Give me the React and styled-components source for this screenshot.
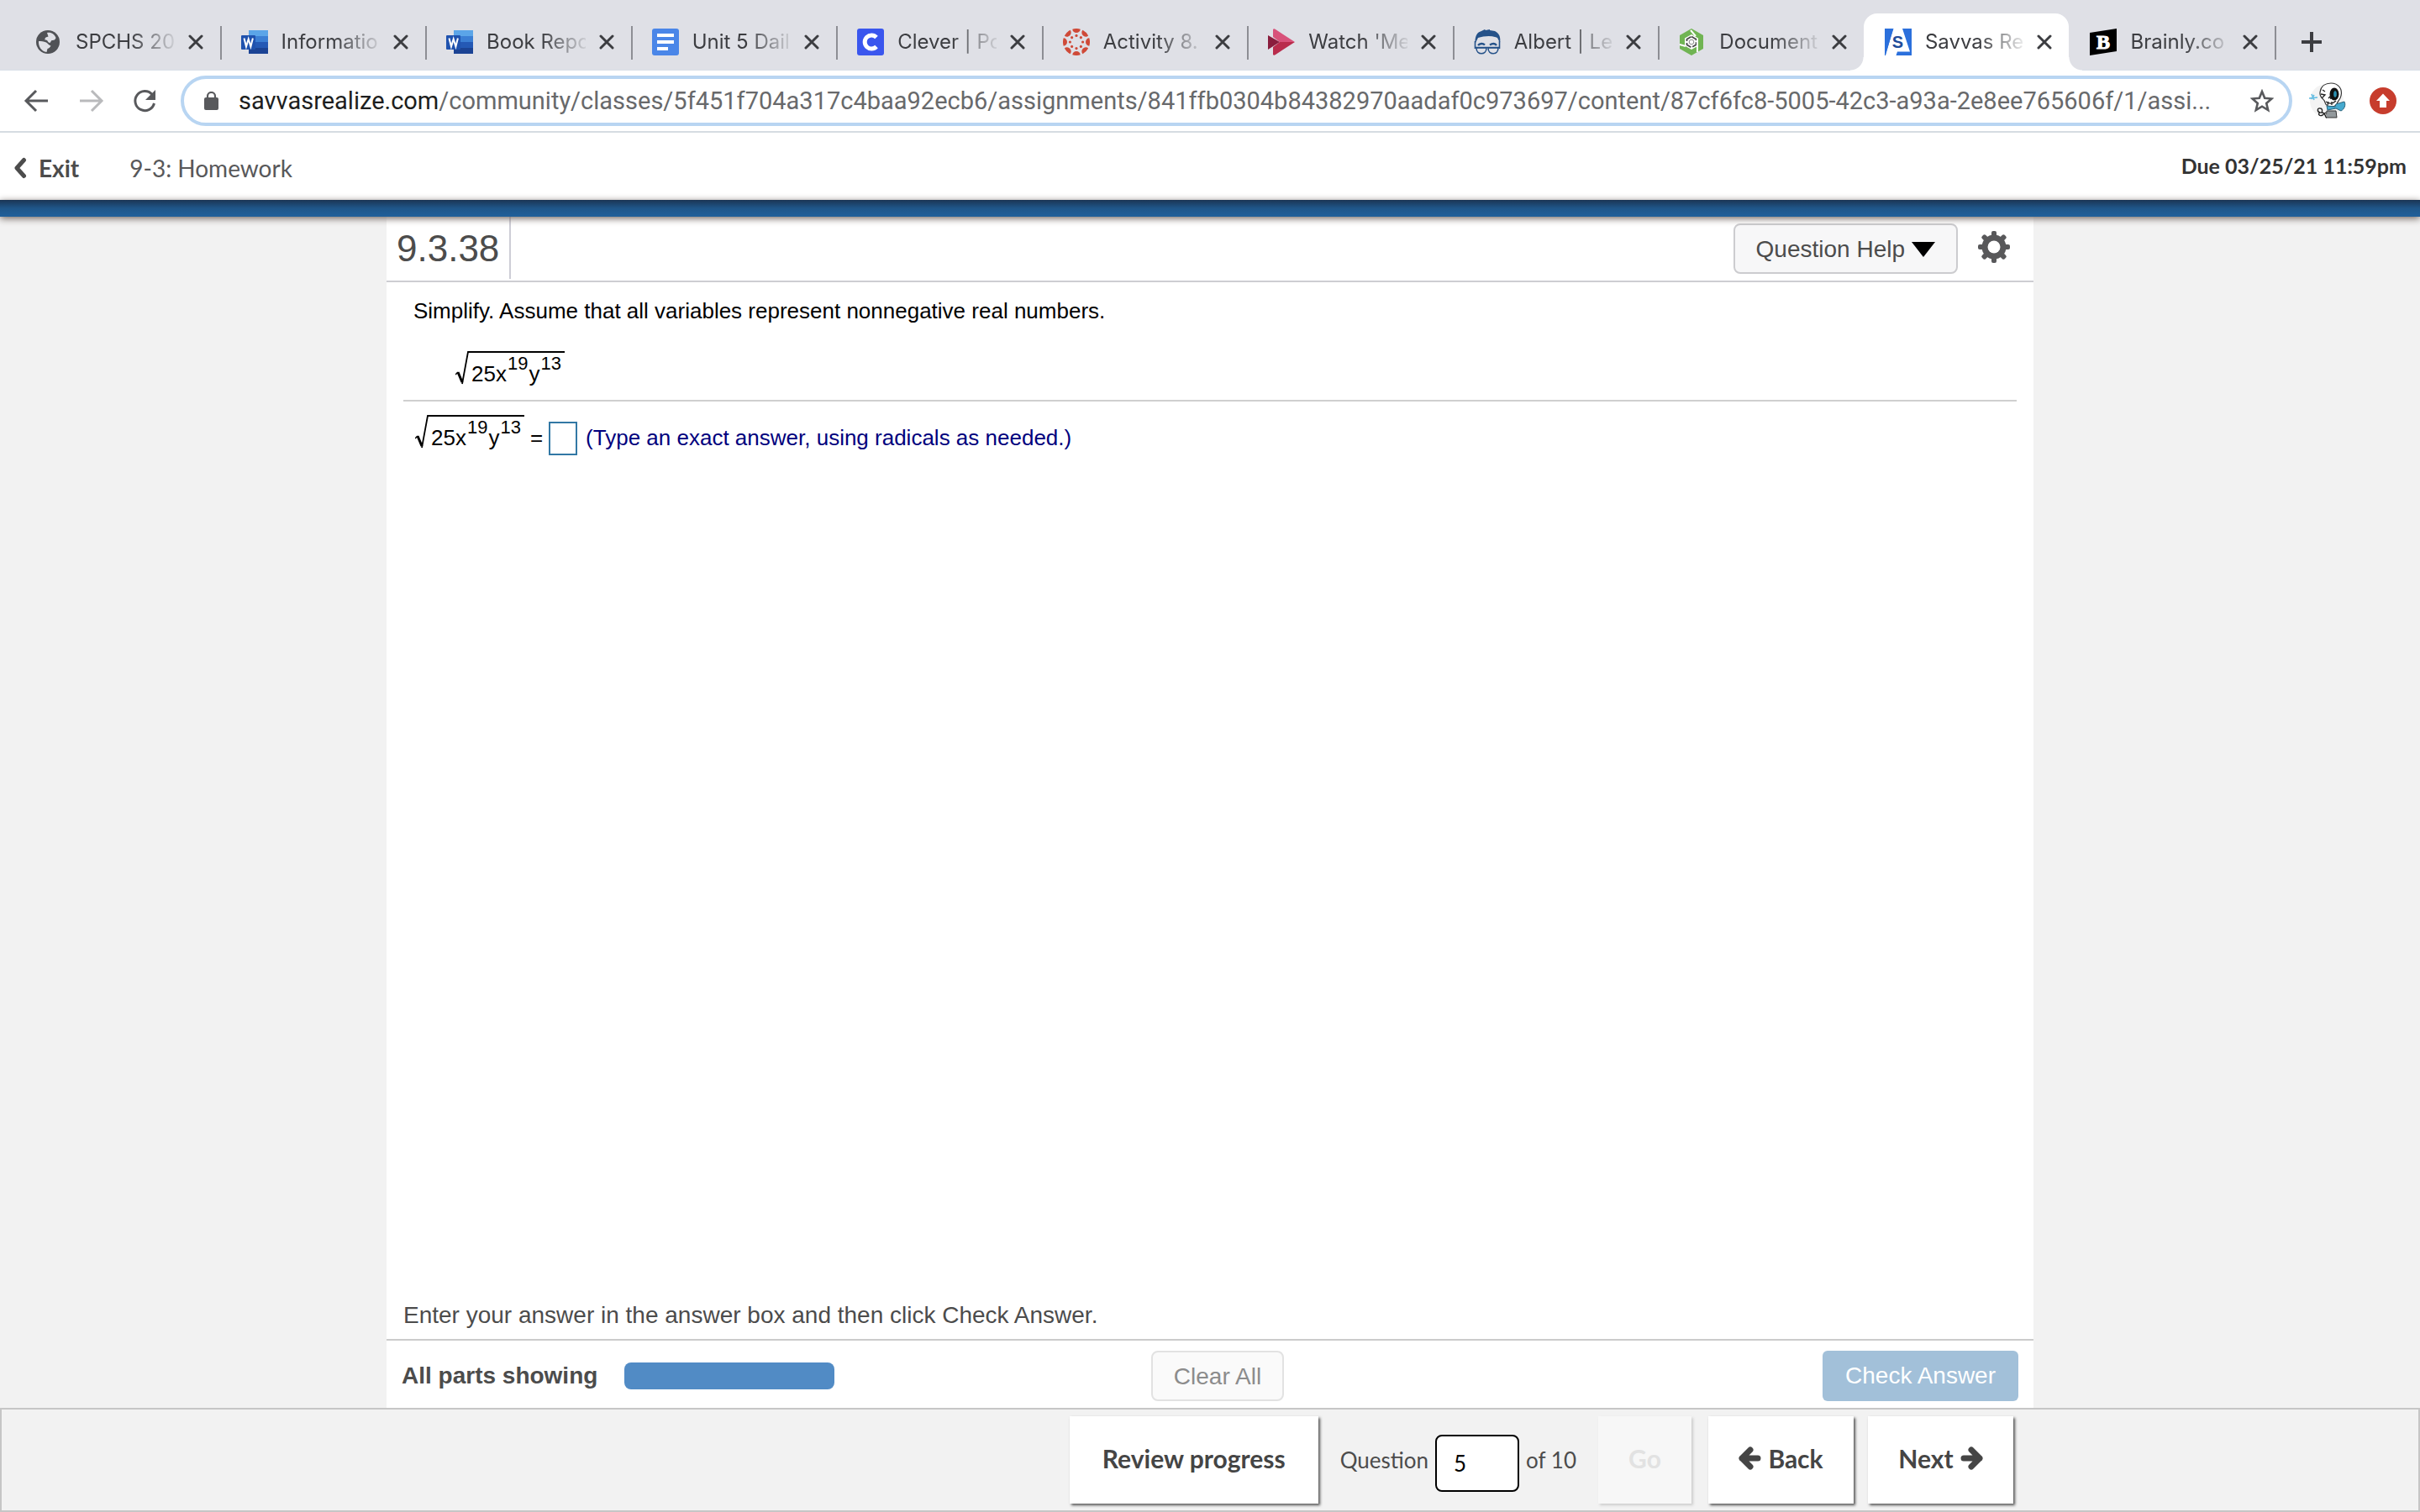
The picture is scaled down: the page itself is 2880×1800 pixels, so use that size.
import React from "react";
import styled, { createGlobalStyle } from "styled-components";

const ui = `Inter, "Liberation Sans", sans-serif`;
const omni = `Roboto, "Liberation Sans", sans-serif`;
const brand = `Lato, "Liberation Sans", sans-serif`;
const body = `"Liberation Sans", Arial, sans-serif`;

const GlobalStyle = createGlobalStyle`
  *, *::before, *::after { box-sizing: border-box; }
  html, body, #root { height: 100%; }
  body { margin: 0; background: #f2f2f2; color: #4c4c4c; font-family: ${body}; }
  button, input { font: inherit; color: inherit; }
  button { margin: 0; padding: 0; border: 0; background: none; }
  svg { display: block; flex: none; }
`;

const Page = styled.div`
  display: flex;
  flex-direction: column;
  min-height: 100vh;
`;

/* ---------- browser tabs ---------- */
const TabStrip = styled.div`
  display: flex;
  height: 84px;
  padding-top: 16px;
  padding-left: 17px;
  background: #dfe0e6;
  border-bottom: 1px solid #d9e0e8;
  font-family: ${ui};
  font-size: 24px;
  color: #3c3d41;
`;
const Tabs = styled.div`
  flex: 1;
  display: grid;
  grid-template-columns: repeat(11, minmax(0, 1fr));
`;
const Tab = styled.div`
  position: relative;
  display: flex;
  align-items: center;
  padding: 0 18px 0 25px;
  height: 68px;
  border-radius: 16px 16px 0 0;
  background: ${(p) => (p.$active ? "#fff" : "transparent")};
  &::after {
    content: "";
    position: absolute;
    right: -2px;
    top: 15px;
    width: 2px;
    height: 40px;
    background: ${(p) => (p.$line ? "#8d8e94" : "transparent")};
  }
`;
const Flare = styled.span`
  position: absolute;
  bottom: 0;
  ${(p) => p.$side}: -16px;
  width: 16px;
  height: 16px;
  background: radial-gradient(
    circle at ${(p) => (p.$side === "left" ? "0 0" : "100% 0")},
    transparent 15px,
    #fff 16px
  );
`;
const TabLabel = styled.span`
  flex: 1;
  min-width: 0;
  margin: 0 16px;
  white-space: nowrap;
  line-height: 32px;
  mask-image: linear-gradient(to right, #000 55%, transparent 105%);
`;
const CloseButton = styled.button`
  display: flex;
  align-items: center;
  width: 20px;
  height: 32px;
`;
const NewTab = styled.div`
  width: 173px;
  padding-left: 32px;
  display: flex;
  align-items: center;
`;

/* ---------- address bar ---------- */
const Toolbar = styled.div`
  display: flex;
  align-items: center;
  height: 74px;
  padding: 0 28px;
  background: #fff;
  border-bottom: 2px solid #d5dce2;
`;
const ToolButton = styled.button`
  display: flex;
  width: 32px;
  margin-right: 32px;
`;
const Address = styled.div`
  flex: 1;
  min-width: 0;
  display: flex;
  align-items: center;
  height: 60px;
  margin: 0 20px 0 -5px;
  padding: 0 18px 0 24px;
  border: 4px solid #b8d5f2;
  border-radius: 30px;
`;
const Url = styled.span`
  flex: 1;
  min-width: 0;
  margin: 0 16px 0 24px;
  white-space: nowrap;
  font-family: ${omni};
  font-size: 29px;
  line-height: 36px;
  color: #68696b;
`;
const Host = styled.span`
  color: #1d1e20;
`;
const Extensions = styled.div`
  display: flex;
  align-items: center;
  gap: 28px;
`;

/* ---------- assignment header ---------- */
const Header = styled.header`
  display: flex;
  align-items: center;
  height: 80px;
  padding: 4px 16px 0;
  background: #fff;
  font-family: ${brand};
  font-size: 28px;
  line-height: 36px;
`;
const ExitLink = styled.a`
  display: flex;
  align-items: center;
  gap: 14px;
  margin-right: 60px;
  color: #4c4c4c;
  font-weight: 700;
  text-decoration: none;
`;
const Title = styled.h1`
  flex: 1;
  margin: 0;
  font-size: 28px;
  font-weight: 400;
  color: #58585a;
`;
const Due = styled.span`
  padding-bottom: 6px;
  font-size: 25px;
  font-weight: 700;
  color: #333;
`;
const BlueBar = styled.div`
  position: relative;
  height: 20px;
  background: linear-gradient(#1b3554, #1f5689 50%, #20609b);
  box-shadow: 0 2px 8px #6d625c;
`;

/* ---------- exercise ---------- */
const Panel = styled.main`
  flex: 1;
  display: flex;
  flex-direction: column;
  width: 100%;
  max-width: 1960px;
  margin: 0 auto;
  background: #fff;
`;
const PanelHead = styled.div`
  display: flex;
  align-items: center;
  height: 78px;
  border-bottom: 2px solid #cdcdd2;
`;
const ExerciseNumber = styled.h2`
  align-self: stretch;
  display: flex;
  align-items: center;
  width: 148px;
  margin: 0 auto 2px 0;
  padding: 2px 0 0 12px;
  border-right: 2px solid #cdcdd6;
  font-size: 44px;
  font-weight: 400;
`;
const PlainButton = styled.button`
  display: flex;
  align-items: center;
  justify-content: center;
  gap: 8px;
  height: 60px;
  padding: 1px 25px 0;
  border: 2px solid #cccccf;
  border-radius: 8px;
  background: #f7f7f8;
  font-size: 28px;
  color: #4c4c4c;
  &:disabled {
    margin-left: 18px;
    border-color: #e2e2e2;
    background: #fafafa;
    color: #8c8c8c;
  }
`;
const GearButton = styled.button`
  margin: 0 28px 4px 24px;
`;
const Work = styled.section`
  flex: 1;
  margin: 0 20px;
  color: #000;
  font-size: 26px;
  line-height: 32px;
`;
const Prompt = styled.div`
  padding: 18px 12px 0;
  height: 142px;
  border-bottom: 2px solid #cfcfcf;
`;
const PromptText = styled.p`
  margin: 0 0 32px;
`;
const Shown = styled.div`
  padding-left: 48px;
`;
const AnswerRow = styled.div`
  display: flex;
  align-items: flex-start;
  padding: 16px 12px;
`;
const Radical = styled.span`
  display: inline-flex;
  align-items: flex-start;
  padding-left: 2px;
`;
const Radicand = styled.span`
  display: flex;
  height: 44px;
  padding: 10px 3px 0;
  border-top: 2px solid #000;
  line-height: 30px;
`;
const Power = styled.sup`
  margin: -12px 1px 0;
  font-size: 22px;
  line-height: 30px;
  vertical-align: baseline;
`;
const Equals = styled.span`
  padding: 12px 7px 0;
  line-height: 30px;
`;
const AnswerBox = styled.input`
  width: 34px;
  height: 40px;
  margin: 8px 10px 0 0;
  padding: 0 4px;
  border: 2px solid #3278a5;
  border-radius: 0;
  background: #fff;
  outline: none;
`;
const Hint = styled.label`
  padding-top: 11px;
  color: #00007d;
`;
const Instruction = styled.p`
  margin: 0;
  padding: 0 20px;
  height: 44px;
  font-size: 28px;
  line-height: 32px;
`;
const ActionBar = styled.div`
  display: grid;
  grid-template-columns: 1fr auto 1fr;
  align-items: center;
  height: 82px;
  padding: 4px 18px 0;
  border-top: 2px solid #cbcbcb;
  font-size: 28px;
`;
const Parts = styled.div`
  display: flex;
  align-items: center;
  gap: 32px;
  font-weight: 700;
`;
const PartsBar = styled.div`
  width: 250px;
  height: 32px;
  border-radius: 8px;
  background: #518bc5;
`;
const CheckButton = styled.button`
  justify-self: end;
  height: 60px;
  padding: 0 27px;
  border-radius: 6px;
  background: #a2c0d9;
  color: #fff;
`;

/* ---------- navigation footer ---------- */
const Footer = styled.footer`
  height: 124px;
  border: 2px solid #c6c6c6;
  background: #f2f2f2;
  font-family: ${brand};
  font-size: 26px;
`;
const FooterInner = styled.div`
  display: flex;
  align-items: center;
  justify-content: flex-end;
  width: 100%;
  max-width: 1960px;
  margin: 0 auto;
  padding: 8px 24px;
`;
const NavButton = styled.button`
  display: flex;
  align-items: center;
  justify-content: center;
  gap: 8px;
  width: ${(p) => p.$width}px;
  height: 104px;
  margin-left: ${(p) => p.$gap || 0}px;
  padding-bottom: 4px;
  background: #fff;
  box-shadow: 2px 2px 3px #555;
  font-size: 30px;
  font-weight: 700;
  color: #454545;
  &:disabled {
    background: #f7f7f7;
    box-shadow: 2px 2px 3px #ccc;
    color: #e2e2e2;
  }
`;
const Jump = styled.div`
  display: flex;
  align-items: center;
  gap: 8px;
  margin: 0 26px 0 26px;
`;
const PageInput = styled.input`
  width: 100px;
  height: 68px;
  margin-top: 8px;
  padding: 0 20px;
  border: 2px solid #000;
  border-radius: 8px;
  background: #fff;
  color: #000;
`;

/* ---------- drawings ---------- */
const Close = () => (
  <svg width="18" height="18" viewBox="0 0 18 18" stroke="#3c3d41" strokeWidth="3" strokeLinecap="round">
    <path d="M2 2l14 14M16 2L2 16" />
  </svg>
);
const Globe = () => (
  <svg width="32" height="32" viewBox="0 0 32 32">
    <circle cx="15" cy="16" r="14" fill="#505256" />
    <path d="M14 5c5-1 9 2 10.500 6-1 3-3 3-5 3l-2 3c-3 0-2-3-5-3.500-2 0-1-2 0-3l3-1zM4 15c3 0 6 0 9 1.500 2 1 3 3.500 5.500 4-1 2-2 3-4 3.500l-1 4C7 27 3.500 21 4 15z" fill="#dfe0e6" />
  </svg>
);
const Word = () => (
  <svg width="32" height="32" viewBox="0 0 32 32">
    <path d="M9 2h23v7H9z" fill="#5ba5e8" />
    <path d="M9 9h23v7H9z" fill="#3b7fd4" />
    <path d="M9 16h23v7H9z" fill="#2459b5" />
    <path d="M9 23h23v7H9z" fill="#1b4394" />
    <rect x="0" y="8" width="17" height="17" rx="1" fill="#1f52ae" />
    <path d="M3.500 11.500l2.500 10 2.700-9 2.700 9 2.500-10" fill="none" stroke="#fff" strokeWidth="2" />
  </svg>
);
const Docs = () => (
  <svg width="32" height="32" viewBox="0 0 32 32">
    <rect width="32" height="32" rx="3" fill="#4a86e8" />
    <path d="M6 8h20M6 16h20M6 24h13" stroke="#fff" strokeWidth="4" />
  </svg>
);
const Clever = () => (
  <svg width="32" height="32" viewBox="0 0 32 32">
    <rect width="32" height="32" rx="3" fill="#3a56ee" />
    <path d="M23 10.500A8 8 0 1 0 23 21.500" fill="none" stroke="#fff" strokeWidth="5" />
  </svg>
);
const Canvas = () => (
  <svg width="32" height="32" viewBox="0 0 32 32" fill="#cf4a38">
    {[0, 45, 90, 135, 180, 225, 270, 315].map((a) => (
      <g key={a} transform={`rotate(${a} 16 16)`}>
        <path d="M11.300 .7a16 16 0 0 1 9.400 0 4.700 4.300 0 0 1-9.400 0z" />
        <circle cx="16" cy="8.400" r="1.600" />
      </g>
    ))}
  </svg>
);
const Stream = () => (
  <svg width="32" height="32" viewBox="0 0 32 32">
    <path d="M6 1q1-1.500 3 0l23 15H14L6 10z" fill="#d8527a" />
    <path d="M32 16L9 31q-2 1.500-3 0V22l8-6z" fill="#b92c4c" />
    <path d="M0 8l14 8L0 25z" fill="#8a1d3d" />
  </svg>
);
const Albert = () => (
  <svg width="32" height="32" viewBox="0 0 32 32" fill="none" stroke="#255289" strokeWidth="1.600">
    <path d="M1.500 18C1 6 6 4 9 3l4-2 1 1 5-1v1l6 1c6 3 7 8 6 14l-3-6c-7-3-16-2-23 0z" fill="#255289" stroke="none" />
    <path d="M1.500 15v9M30.500 15v9M1 22.500h30" />
    <path d="M5 20c2-2.500 6-2.500 8-.5M19 19.500c3-2 6-2 8 .5" strokeWidth="2.400" />
    <path d="M3 23c0 9 12 9 12 0zM17 23c0 9 12 9 12 0z" />
  </svg>
);
const DocHex = () => (
  <svg width="32" height="32" viewBox="0 0 32 32">
    <path d="M15 0l14 8v16l-14 8L1 24V8z" fill="#70b453" />
    <path d="M15 7l8 4.500v9L15 25l-8-4.500v-9z" fill="#fff" />
    <path d="M15 9.500l5.500 3.200v6.600L15 22.500l-5.500-3.200v-6.600z" fill="none" stroke="#4a4a4a" strokeWidth="1.800" strokeDasharray="8 2" />
    <circle cx="15" cy="16" r="2.800" fill="#fff" stroke="#8a8a8a" />
    <path d="M1 19l7 2M14 2l6 7M22 13v15" stroke="#fff" strokeWidth="2" />
  </svg>
);
const LogoLetter = styled.text`
  font-family: ${(p) => p.$font};
  font-size: ${(p) => p.$size}px;
  font-weight: 700;
  text-anchor: middle;
`;
const Savvas = () => (
  <svg width="32" height="32" viewBox="0 0 32 32">
    <path d="M0 0h32v32H0z" fill="#2b70dc" />
    <path d="M10 0h11l9 27.500H15L13.500 32H1z" fill="#fff" />
    <path d="M0 32L10 0" stroke="#2b70dc" strokeWidth="1" />
    <LogoLetter $font={body} $size={20} x="15.500" y="23" fill="#1f4c9a">S</LogoLetter>
  </svg>
);
const Brainly = () => (
  <svg width="32" height="32" viewBox="0 0 32 32">
    <path d="M0 5l32-5v27L0 32z" fill="#000" />
    <LogoLetter $font={`"Liberation Serif", serif`} $size={24} x="16" y="24" fill="#fff" stroke="#fff">B</LogoLetter>
  </svg>
);
const Plus = () => (
  <svg width="24" height="24" viewBox="0 0 24 24" stroke="#3c3d41" strokeWidth="4">
    <path d="M12 0v24M0 12h24" />
  </svg>
);
const Arrow = ({ flip, color }) => (
  <svg width="32" height="32" viewBox="0 0 32 32" fill="none" stroke={color} strokeWidth="3">
    <path d={flip ? "M3 16h25M17 4l12 12-12 12" : "M29 16H4M15 4L3 16l12 12"} />
  </svg>
);
const Reload = () => (
  <svg width="32" height="32" viewBox="0 0 32 32">
    <path d="M27.500 19A11.500 11.500 0 1 1 25 8.500" fill="none" stroke="#58595c" strokeWidth="3" />
    <path d="M29 3v12H17z" fill="#58595c" />
  </svg>
);
const Lock = () => (
  <svg width="17" height="22" viewBox="0 0 17 22">
    <rect y="7" width="17" height="15" rx="2" fill="#58595c" />
    <path d="M4 8V5.500a4.500 4.500 0 0 1 9 0V8" fill="none" stroke="#58595c" strokeWidth="2.200" />
  </svg>
);
const Star = () => (
  <svg width="28" height="28" viewBox="0 0 28 28">
    <path d="M14 3l3.200 7.800 8.300.7-6.300 5.400 2 8.200L14 20.700l-7.200 4.400 2-8.200-6.300-5.400 8.300-.7z" fill="none" stroke="#58595c" strokeWidth="2.600" />
  </svg>
);
const Skeleton = () => (
  <svg width="44" height="44" viewBox="0 0 44 44">
    <circle cx="21" cy="22" r="20" fill="#f3f3f3" />
    <path d="M13 12C14 4 20 1 26 1c9 0 14 7 12 15-1 5-4 6-5 10-4 5-13 3-14-2 0-4-7-5-6-12z" fill="#fff" stroke="#333" strokeWidth="1.200" />
    <ellipse cx="30" cy="14" rx="5.500" ry="7.500" fill="#111" />
    <ellipse cx="31" cy="14" rx="1.800" ry="3.800" fill="#2a8fb0" />
    <path d="M14 14l5 1-4 4M23 19l2-2 1 3M20 23c4 3 8 3 12-1M23 23l-1 4M27 23v4M16 9l3 2" fill="none" stroke="#222" strokeWidth="1.300" />
    <path d="M21 28l10 1 1-3 10-3c2 4 0 9-4 11l-6-3-10 2z" fill="#45a9cf" stroke="#27627a" />
    <path d="M21 34h11l1 8H20z" fill="#93999c" stroke="#333" />
    <path d="M20 36l-4 3c-4 2-6-2-3-3-4-1-3-6 0-5 3 0 3 3 2 5 5 0 4 6 6 6" fill="#fff" stroke="#222" strokeWidth="1.400" />
    <path d="M0 19l10-1M3 14l3 7M6 15l-3 5" stroke="#62bce2" strokeWidth="1.500" />
  </svg>
);
const Update = () => (
  <svg width="32" height="32" viewBox="0 0 32 32">
    <circle cx="16" cy="16" r="16" fill="#c73d2d" />
    <path d="M16 7.500l8 8.500h-4v8h-8v-8H8z" fill="#fff" />
  </svg>
);
const Chevron = () => (
  <svg width="16" height="26" viewBox="0 0 16 26" fill="none" stroke="#4c4c4c" strokeWidth="5" strokeLinecap="round" strokeLinejoin="round">
    <path d="M12.500 3.500L4 13l8.500 9.500" />
  </svg>
);
const Caret = () => (
  <svg width="28" height="18" viewBox="0 0 28 18">
    <path d="M0 0h28L14 18z" fill="#000" />
  </svg>
);
const Gear = () => (
  <svg width="38" height="38" viewBox="0 0 38 38">
    <g fill="#58585a">
      {[0, 45, 90, 135].map((a) => (
        <rect key={a} x="16" y="0" width="6" height="38" rx="2" transform={`rotate(${a} 19 19)`} />
      ))}
      <circle cx="19" cy="19" r="14.500" />
    </g>
    <circle cx="19" cy="19" r="7.500" fill="#fff" />
  </svg>
);
const Root = () => (
  <svg width="16" height="42" viewBox="0 0 16 42" fill="none" stroke="#000">
    <path d="M0 28l3-3" strokeWidth="1.500" />
    <path d="M3 25l5 12" strokeWidth="3" />
    <path d="M8 39L15 1h1" strokeWidth="1.800" />
  </svg>
);
const BoldArrow = ({ flip }) => (
  <svg width="27" height="28" viewBox="0 0 27 28" fill="none" stroke="#454545" strokeWidth="7" strokeLinecap="round" strokeLinejoin="round">
    <path d={flip ? "M4 14h19M13 4l10 10-10 10" : "M23 14H4M14 4L4 14l10 10"} />
  </svg>
);

const tabs = [
  { label: "SPCHS 20", Icon: Globe, line: true },
  { label: "Informatio", Icon: Word, line: true },
  { label: "Book Repo", Icon: Word, line: true },
  { label: "Unit 5 Dail", Icon: Docs, line: true },
  { label: "Clever | Po", Icon: Clever, line: true },
  { label: "Activity 8.", Icon: Canvas, line: true },
  { label: "Watch 'Me", Icon: Stream, line: true },
  { label: "Albert | Le", Icon: Albert, line: true },
  { label: "Document", Icon: DocHex },
  { label: "Savvas Re", Icon: Savvas, active: true },
  { label: "Brainly.co", Icon: Brainly, line: true },
];

const Expression = () => (
  <Radical>
    <Root />
    <Radicand>
      25x<Power>19</Power>y<Power>13</Power>
    </Radicand>
  </Radical>
);

export default function App() {
  return (
    <Page>
      <GlobalStyle />
      <TabStrip>
        <Tabs>
          {tabs.map(({ label, Icon, line, active }) => (
            <Tab key={label} $line={line} $active={active}>
              {active && <Flare $side="left" />}
              {active && <Flare $side="right" />}
              <Icon />
              <TabLabel>{label}</TabLabel>
              <CloseButton aria-label={`Close ${label}`}><Close /></CloseButton>
            </Tab>
          ))}
        </Tabs>
        <NewTab>
          <button aria-label="New tab"><Plus /></button>
        </NewTab>
      </TabStrip>
      <Toolbar>
        <ToolButton aria-label="Back"><Arrow color="#58595c" /></ToolButton>
        <ToolButton aria-label="Forward"><Arrow flip color="#b9babc" /></ToolButton>
        <ToolButton aria-label="Reload"><Reload /></ToolButton>
        <Address>
          <Lock />
          <Url>
            <Host>savvasrealize.com</Host>
            /community/classes/5f451f704a317c4baa92ecb6/assignments/841ffb0304b84382970aadaf0c973697/content/87cf6fc8-5005-42c3-a93a-2e8ee765606f/1/assi...
          </Url>
          <button aria-label="Bookmark"><Star /></button>
        </Address>
        <Extensions>
          <button aria-label="Profile"><Skeleton /></button>
          <button aria-label="Update"><Update /></button>
        </Extensions>
      </Toolbar>
      <Header>
        <ExitLink href="#exit"><Chevron />Exit</ExitLink>
        <Title>9-3: Homework</Title>
        <Due>Due 03/25/21 11:59pm</Due>
      </Header>
      <BlueBar />
      <Panel>
        <PanelHead>
          <ExerciseNumber>9.3.38</ExerciseNumber>
          <PlainButton>Question Help<Caret /></PlainButton>
          <GearButton aria-label="Settings"><Gear /></GearButton>
        </PanelHead>
        <Work>
          <Prompt>
            <PromptText>Simplify. Assume that all variables represent nonnegative real numbers.</PromptText>
            <Shown><Expression /></Shown>
          </Prompt>
          <AnswerRow>
            <Expression />
            <Equals>=</Equals>
            <AnswerBox id="answer" />
            <Hint htmlFor="answer">(Type an exact answer, using radicals as needed.)</Hint>
          </AnswerRow>
        </Work>
        <Instruction>Enter your answer in the answer box and then click Check Answer.</Instruction>
        <ActionBar>
          <Parts>All parts showing<PartsBar /></Parts>
          <PlainButton disabled>Clear All</PlainButton>
          <CheckButton>Check Answer</CheckButton>
        </ActionBar>
      </Panel>
      <Footer>
        <FooterInner>
          <NavButton $width={296}>Review progress</NavButton>
          <Jump>
            <label htmlFor="question">Question</label>
            <PageInput id="question" defaultValue="5" />
            <span>of 10</span>
          </Jump>
          <NavButton $width={111} disabled>Go</NavButton>
          <NavButton $width={173} $gap={20}><BoldArrow />Back</NavButton>
          <NavButton $width={173} $gap={17}>Next<BoldArrow flip /></NavButton>
        </FooterInner>
      </Footer>
    </Page>
  );
}
